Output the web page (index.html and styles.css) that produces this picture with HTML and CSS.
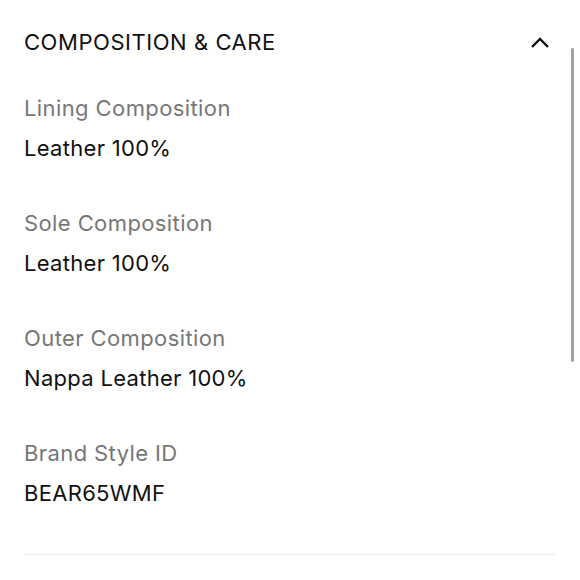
FILE: index.html
```html
<!DOCTYPE html>
<html>
<head>
<meta charset="utf-8">
<link rel="stylesheet" href="styles.css">
</head>
<body>
<div class="panel">
  <div class="header">
    <h2 class="title">COMPOSITION &amp; CARE</h2>
    <svg class="chevron" width="20" height="12" viewBox="0 0 20 12"><path d="M2 10 L10 2 L18 10" fill="none" stroke="#111" stroke-width="2.4"/></svg>
  </div>
  <dl class="list">
    <div class="item"><dt>Lining Composition</dt><dd>Leather 100%</dd></div>
    <div class="item"><dt>Sole Composition</dt><dd>Leather 100%</dd></div>
    <div class="item"><dt>Outer Composition</dt><dd>Nappa Leather 100%</dd></div>
    <div class="item"><dt>Brand Style ID</dt><dd>BEAR65WMF</dd></div>
  </dl>
  <div class="divider"></div>
</div>
<div class="scrollbar"></div>
</body>
</html>
```
FILE: styles.css
```css
html, body { margin: 0; padding: 0; background: #fff; }
body { font-family: Inter, "Liberation Sans", Arial, sans-serif; color: #111; width: 580px; height: 580px; overflow: hidden; position: relative; }
.panel { padding: 28px 24px 0 24px; width: 532px; }
.header { display: flex; justify-content: space-between; align-items: center; height: 28px; }
.title { margin: 0; font-size: 22px; font-weight: normal; line-height: 29px; letter-spacing: 0.55px; }
.chevron { margin-right: 6px; margin-top: 2px; }
.list { margin: 38px 0 0 0; padding: 0; }
.item { height: 115px; }
dt { font-size: 22px; line-height: 29px; color: #777; letter-spacing: 0.4px; }
dd { margin: 11px 0 0 0; font-size: 22px; line-height: 29px; color: #111; letter-spacing: 0.3px; }
.divider { margin-top: 0; height: 1px; background: #eeeeee; }
.scrollbar { position: absolute; left: 571px; top: 48px; width: 3px; height: 314px; border-radius: 2px; background: #a3a3a3; }
```
